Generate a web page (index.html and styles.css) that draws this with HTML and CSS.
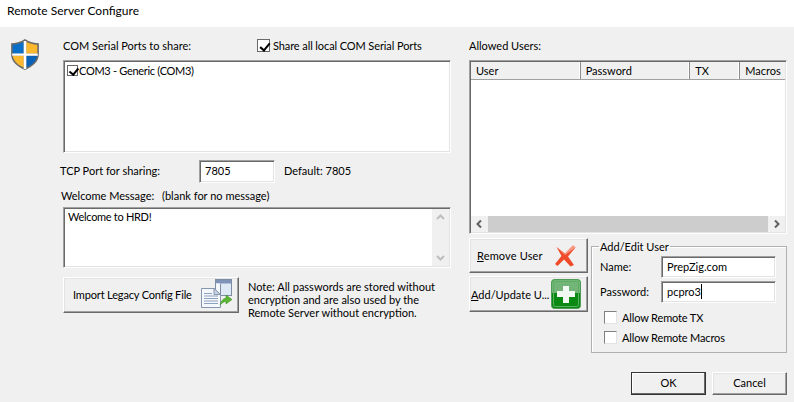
FILE: index.html
```html
<!DOCTYPE html>
<html lang="en">
<head>
<meta charset="utf-8">
<title>Remote Server Configure</title>
<link rel="stylesheet" href="styles.css">
</head>
<body>
<div class="window">
  <div class="titlebar">Remote Server Configure</div>
  <div class="dialog">
    <div class="icon-col">
      <svg class="shield" width="32" height="33" viewBox="0 0 30 32" preserveAspectRatio="none">
        <path d="M15 1 C11 4 6 5 2 5 L2 16 C2 23 8 28 15 31 C22 28 28 23 28 16 L28 5 C24 5 19 4 15 1 Z" fill="#6a6a6a"/>
        <path d="M13.8 3.6 C11 5.400 7 6.300 3.500 6.500 L3.500 15 L13.800 15 Z" fill="#0a6fc8"/>
        <path d="M16.200 3.600 C19 5.400 23 6.300 26.500 6.500 L26.500 15 L16.200 15 Z" fill="#fdb92e"/>
        <path d="M3.500 17.200 L13.800 17.200 L13.800 28.600 C8.500 26.400 4.300 22.500 3.500 17.200 Z" fill="#fdb92e"/>
        <path d="M16.200 17.200 L26.500 17.200 C25.700 22.500 21.500 26.400 16.200 28.600 Z" fill="#0a62b8"/>
        <path d="M13.800 3 H16.200 V30 H13.800 Z M3 15 H27 V17.200 H3 Z" fill="#fff"/>
      </svg>
    </div>

    <div class="left-col">
      <div class="share-row">
        <span class="share-label">COM Serial Ports to share:</span>
        <label class="check share-all"><span class="box checked"></span>Share all local COM Serial Ports</label>
      </div>
      <div class="sunken ports">
        <label class="port"><span class="box small checked"></span>COM3 - Generic (COM3)</label>
      </div>
      <div class="tcp-row">
        <span class="tcp-label">TCP Port for sharing:</span>
        <div class="sunken field tcp-field">7805</div>
        <span class="tcp-default">Default: 7805</span>
      </div>
      <div class="welcome-label"><span class="welcome-name">Welcome Message:</span><span>(blank for no message)</span></div>
      <div class="sunken message">
        <div class="message-text">Welcome to HRD!</div>
        <div class="vscroll">
          <svg width="17" height="17" viewBox="0 0 17 17"><path d="M5 10 L8.500 6.500 L12 10" class="chev"/></svg>
          <svg width="17" height="17" viewBox="0 0 17 17"><path d="M5 7 L8.500 10.500 L12 7" class="chev"/></svg>
        </div>
      </div>
      <div class="import-row">
        <button class="raised import" type="button">
          <span class="import-text">Import Legacy Config File</span>
          <svg width="34" height="34" viewBox="0 0 34 34">
            <rect x="15.500" y="1.500" width="16" height="16" fill="#dfe9f5" stroke="#7d8ba5"/>
            <rect x="16" y="2" width="15" height="3.500" fill="#7f93b8"/>
            <rect x="16" y="5.500" width="4.500" height="11.500" fill="#f4f7fb"/>
            <path d="M20.500 5.500 V17" stroke="#7d8ba5"/>
            <path d="M1.500 10.500 H14 L20.500 16.500 V29.500 H1.500 Z" fill="#f5f8fc" stroke="#8796b0"/>
            <path d="M14 10.500 V16.500 H20.500 Z" fill="#c7d4e6" stroke="#8796b0"/>
            <path d="M4 15.500 H12 M4 18 H18 M4 20.500 H18 M4 23 H18 M4 25.500 H18" stroke="#8ca0c0"/>
            <path d="M20 27 C21 23 23 20.500 26 20 V17 L32 21.500 L26 26 V23.500 C24 23.500 22 25 20 27 Z" fill="#5cb531" stroke="#2f8a1e" stroke-width=".5"/>
          </svg>
        </button>
        <p class="note">Note: All passwords are stored without<br>encryption and are also used by the<br>Remote Server without encryption.</p>
      </div>
    </div>

    <div class="right-col">
      <div class="allowed-label">Allowed Users:</div>
      <div class="sunken users">
        <div class="users-head">
          <span class="col-user">User</span>
          <span class="col-pass">Password</span>
          <span class="col-tx">TX</span>
          <span class="col-macros">Macros</span>
        </div>
        <div class="users-body"></div>
        <div class="hscroll">
          <svg width="17" height="16" viewBox="0 0 17 16"><path d="M10 4.500 L6.500 8 L10 11.500" class="chev dark"/></svg>
          <div class="hthumb"></div>
          <svg width="17" height="16" viewBox="0 0 17 16"><path d="M7 4.500 L10.500 8 L7 11.500" class="chev dark"/></svg>
        </div>
      </div>
      <div class="lower">
        <div class="user-buttons">
          <button class="raised user-btn" type="button">
            <span class="remove-text"><u>R</u>emove User</span>
            <svg width="24" height="24" viewBox="0 0 24 24">
              <path d="M3.500 3 L12 9.500 L20 1.500 L22.500 3.500 L15 12.500 L21 21 L17.500 22.500 L11 15.500 L4.500 22 L2 20 L8.500 12 Z" fill="#ef4a2a"/>
              <path d="M3.500 3 L12 9.500 L20 1.500 L22.500 3.500 L12 11 Z" fill="#f79a85"/>
            </svg>
          </button>
          <button class="raised user-btn add-btn" type="button">
            <span class="add-text"><u>A</u>dd/Update U...</span>
            <svg class="plus" width="30" height="30" viewBox="0 0 30 30">
              <rect x=".5" y=".5" width="29" height="29" rx="3" fill="#0a8a12" stroke="#4f9a55"/>
              <path d="M1 3.500 A2.500 2.500 0 0 1 3.500 1 H26.500 A2.500 2.500 0 0 1 29 3.500 V14 H1 Z" fill="#73b578"/>
              <rect x="2.500" y="2.500" width="25" height="25" rx="2" fill="none" stroke="#5bb062" stroke-width="1"/>
              <path d="M12 7 H18 V12 H24 V18 H18 V24 H12 V18 H6 V12 H12 Z" fill="#f2f8f2"/>
            </svg>
          </button>
        </div>
        <fieldset class="group">
          <legend>Add/Edit User</legend>
          <div class="form-row">
            <span class="form-label">Name:</span>
            <div class="sunken field form-field">PrepZig.com</div>
          </div>
          <div class="form-row">
            <span class="form-label">Password:</span>
            <div class="sunken field form-field">pcpro3<span class="caret"></span></div>
          </div>
          <label class="check allow first"><span class="box"></span>Allow Remote TX</label>
          <label class="check allow"><span class="box"></span>Allow Remote Macros</label>
        </fieldset>
      </div>
      <div class="actions">
        <button class="raised action default" type="button">OK</button>
        <button class="raised action" type="button">Cancel</button>
      </div>
    </div>
  </div>
</div>
</body>
</html>
```
FILE: styles.css
```css
* { box-sizing: border-box; }
html, body { margin: 0; padding: 0; }
body {
  width: 794px;
  height: 402px;
  overflow: hidden;
  background: #f0f0f0;
  color: #000;
  font-family: Lato, "Open Sans", "Liberation Sans", sans-serif;
  font-size: 11px;
  line-height: 13px;
}
.window { height: 402px; display: flex; flex-direction: column; }
.titlebar {
  height: 27px;
  flex: none;
  background: #fff;
  padding: 4px 0 0 7px;
  font-size: 12px;
  line-height: 14px;
  color: #000;
}
.dialog { display: flex; flex: 1; }
.icon-col { width: 63px; flex: none; padding: 11px 0 0 9px; }
.shield { display: block; }
.left-col { width: 388px; flex: none; }
.right-col { width: 318px; flex: none; margin-left: 18px; }

.sunken {
  background: #fff;
  border: 1px solid;
  border-color: #a0a0a0 #fff #fff #a0a0a0;
  box-shadow: inset 1px 1px 0 #696969, inset -1px -1px 0 #e3e3e3;
}
.raised {
  display: flex;
  align-items: center;
  margin: 0;
  padding: 0;
  background: #f0f0f0;
  color: #000;
  font: inherit;
  border: 1px solid;
  border-color: #fff #696969 #696969 #fff;
  box-shadow: inset -1px -1px 0 #a0a0a0, inset 1px 1px 0 #e3e3e3;
}

.share-row { display: flex; height: 33px; padding-top: 12px; }
.share-label { width: 194px; flex: none; }
.share-all { letter-spacing: -0.1px; }
.check { display: flex; align-items: center; height: 13px; }
.box {
  width: 13px;
  height: 13px;
  flex: none;
  margin-right: 3px;
  background: #fff;
  border: 1px solid #696969;
  position: relative;
}
.box.checked::after {
  content: "";
  position: absolute;
  left: 3.5px;
  top: 0.5px;
  width: 4px;
  height: 8px;
  border: solid #000;
  border-width: 0 2px 2px 0;
  transform: rotate(40deg);
}
.box.small { width: 11px; height: 11px; margin-right: 1px; }
.box.small.checked::after { left: 2.5px; top: 0; width: 3.5px; height: 7px; }

.ports { height: 93px; padding: 3px 0 0 3px; }
.port { display: flex; align-items: center; height: 13px; letter-spacing: -0.3px; }

.tcp-row { display: flex; align-items: center; height: 23px; margin-top: 7px; margin-left: -3px; }
.tcp-label { width: 139px; flex: none; padding-bottom: 3px; }
.field { padding: 0 0 2px 5px; display: flex; align-items: center; }
.tcp-field { width: 76px; height: 23px; flex: none; }
.tcp-default { margin-left: 9px; padding-bottom: 3px; }

.welcome-label { display: flex; margin: 6px 0 0 -2px; height: 18px; white-space: nowrap; }
.welcome-name { width: 101px; flex: none; }
.message { display: flex; height: 61px; }
.message-text { flex: 1; padding: 2px 0 0 4px; letter-spacing: -0.3px; }
.vscroll {
  width: 17px;
  flex: none;
  margin: 1px 1px 1px 0;
  background: #f0f0f0;
  display: flex;
  flex-direction: column;
  justify-content: space-between;
}
.vscroll svg, .hscroll svg { display: block; flex: none; }
.chev { fill: none; stroke: #bdbdbd; stroke-width: 2; }
.chev.dark { stroke: #606060; }

.import-row { display: flex; margin-top: 9px; }
.import { width: 176px; height: 36px; flex: none; padding: 0 4px 2px 9px; justify-content: space-between; }
.import svg { margin-top: 2px; }
.import-text { white-space: nowrap; letter-spacing: -0.16px; }
.note { margin: 3px 0 0 9px; white-space: nowrap; }

.allowed-label { height: 33px; padding-top: 12px; }
.users { height: 174px; display: flex; flex-direction: column; padding: 1px; }
.users-head { display: flex; height: 18px; flex: none; background: #f0f0f0; border-bottom: 1px solid #a0a0a0; }
.users-head span { padding: 2px 0 0 5px; border-right: 1px solid #8c8c8c; box-shadow: inset -1px 0 0 #fff; }
.col-user, .col-pass { width: 110px; }
.col-tx { width: 50px; }
.col-macros { width: 45px; border-right: 0 !important; box-shadow: none !important; }
.users-body { flex: 1; }
.hscroll { display: flex; height: 16px; flex: none; background: #f0f0f0; align-items: stretch; }
.hthumb { flex: 1; background: #cdcdcd; }

.lower { display: flex; margin-top: 4px; }
.user-buttons { width: 119px; flex: none; }
.user-btn { width: 119px; height: 35px; }
.remove-text { width: 76px; flex: none; text-align: left; margin-left: 7px; white-space: nowrap; letter-spacing: 0.15px; }
.add-btn { height: 36px; margin-top: 3px; }
.add-text { width: 80px; flex: none; text-align: left; margin-left: 1px; white-space: nowrap; }
.group {
  width: 196px;
  height: 113px;
  flex: none;
  margin: 2px 0 0 3px;
  padding: 3px 0 0 8px;
  border: 1px solid #b0b0b0;
  box-shadow: inset 1px 1px 0 #fff;
}
.group legend { padding: 0 1px; margin-left: -1px; line-height: 13px; }
.form-row { display: flex; align-items: center; height: 22px; margin-bottom: 3px; }
.form-label { width: 61px; flex: none; padding-bottom: 2px; }
.form-field { width: 115px; height: 22px; }
.caret { width: 1px; height: 15px; background: #000; }
.allow { margin: 0 0 0 4px; height: 13px; letter-spacing: -0.15px; }
.allow .box { margin-right: 5px; border-color: #808080 #e3e3e3 #e3e3e3 #808080; }
.allow.first { margin-top: 8px; margin-bottom: 7px; }

.actions { display: flex; justify-content: flex-end; gap: 6px; margin-top: 19px; }
.action { width: 75px; height: 23px; justify-content: center; padding-bottom: 2px; }
.default { border: 1px solid #333; box-shadow: inset -1px -1px 0 #696969, inset 1px 1px 0 #fff; }
```
